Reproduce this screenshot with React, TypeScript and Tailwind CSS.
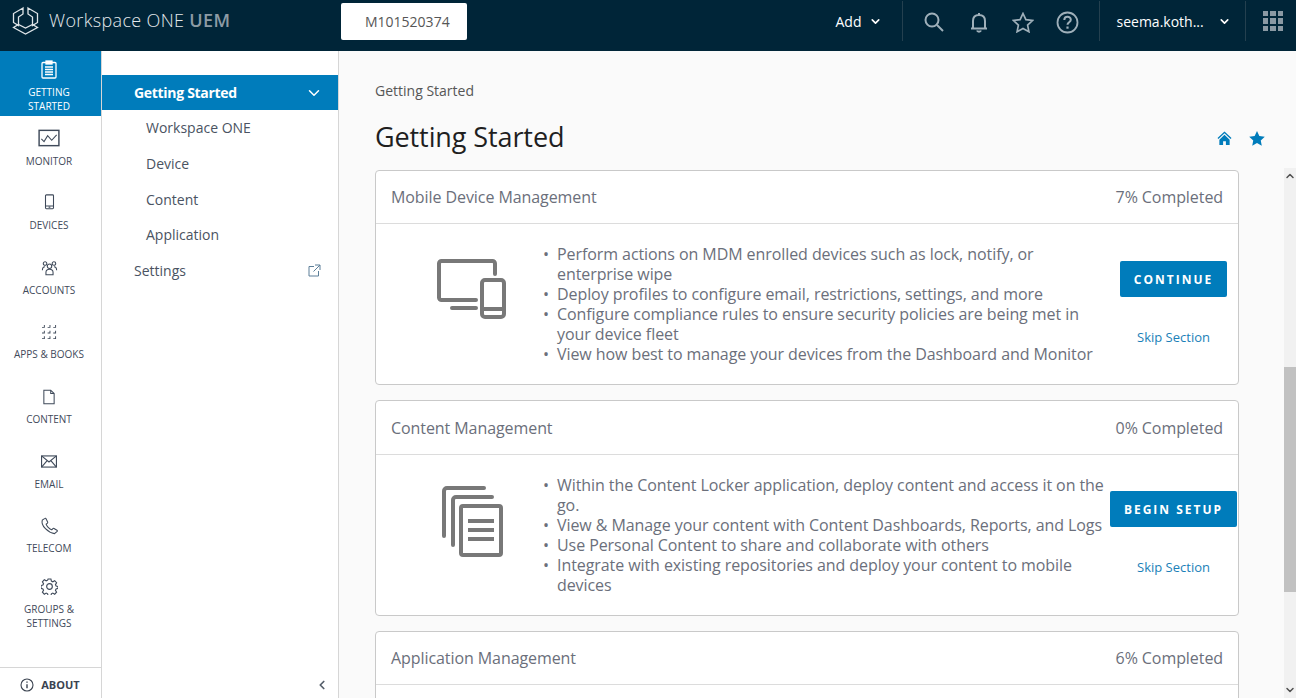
import { ChevronDown, ChevronLeft, ChevronUp } from "lucide-react";
import type { ReactNode } from "react";

const stroke = { fill: "none", stroke: "currentColor", strokeWidth: 1.2 };

const railItems: { label: string[]; h: string; iconH: string; labelMt: string; icon: ReactNode }[] = [
  {
    label: ["MONITOR"],
    h: "h-[65px]",
    iconH: "h-[31px]",
    labelMt: "mt-[7px]",
    icon: (
      <svg width="22" height="18" viewBox="0 0 24 20" {...stroke}>
        <rect x="1" y="1.5" width="22" height="17" strokeWidth="1.6" />
        <path d="M3.5 11l3 3 4-6.5 4.5 5 5.5-6" />
      </svg>
    ),
  },
  {
    label: ["DEVICES"],
    h: "h-[64px]",
    iconH: "h-[29px]",
    labelMt: "mt-[8px]",
    icon: (
      <svg width="11" height="16" viewBox="0 0 12 18" {...stroke}>
        <rect x="1.500" y="1" width="9" height="15.500" rx="1" />
        <path d="M1.500 13.500h9M5 15h2" />
      </svg>
    ),
  },
  {
    label: ["ACCOUNTS"],
    h: "h-[65px]",
    iconH: "h-[31px]",
    labelMt: "mt-[7px]",
    icon: (
      <svg width="17" height="16" viewBox="0 0 18 18" {...stroke}>
        <circle cx="9" cy="7" r="2.500" />
        <circle cx="4" cy="4" r="2" />
        <circle cx="14" cy="4" r="2" />
        <path d="M5 16.500v-2.500c0-2 1.500-3.500 4-3.500s4 1.500 4 3.500v2.500zM1 11.500c0-2.500 1-4 3-4M17 11.500c0-2.500-1-4-3-4" />
      </svg>
    ),
  },
  {
    label: ["APPS & BOOKS"],
    h: "h-[64px]",
    iconH: "h-[30px]",
    labelMt: "mt-[7px]",
    icon: (
      <svg width="15" height="15" viewBox="0 0 16 16" fill="#3f4a5a">
        {[1, 7, 13].flatMap((y) =>
          [1, 7, 13].map((x) => <path key={x + "-" + y} d={`M${x + 1} ${y - 1}h1v3h-3v-1h2z`} />),
        )}
      </svg>
    ),
  },
  {
    label: ["CONTENT"],
    h: "h-[65px]",
    iconH: "h-[31px]",
    labelMt: "mt-[7px]",
    icon: (
      <svg width="12" height="16" viewBox="0 0 14 18" {...stroke}>
        <path d="M1 1h8l4 4v12H1zM9 1v4h4" />
      </svg>
    ),
  },
  {
    label: ["EMAIL"],
    h: "h-[65px]",
    iconH: "h-[29px]",
    labelMt: "mt-[9px]",
    icon: (
      <svg width="18" height="13" viewBox="0 0 18 14" {...stroke}>
        <rect x="1" y="1" width="16" height="12" />
        <path d="M1 1l8 6.500L17 1M1 13l6-7M17 13l-6-7" />
      </svg>
    ),
  },
  {
    label: ["TELECOM"],
    h: "h-[61px]",
    iconH: "h-[31px]",
    labelMt: "mt-[6px]",
    icon: (
      <svg width="19" height="18" viewBox="0 0 20 20" {...stroke}>
        <path d="M5 1.500L2 3.500c-1 3 1 7 3.500 9.500S12 18 15.500 18.500l3-2.500c.5-.5.3-1-.2-1.300l-3.300-2c-.5-.3-1-.2-1.300.2l-1.200 1.300C11 13.800 9.500 12.500 8.500 11.500S6.700 9 6.300 8l1.400-1.200c.4-.4.4-.8.2-1.300L6 1.800c-.3-.5-.6-.6-1-.3z" />
      </svg>
    ),
  },
  {
    label: ["GROUPS &", "SETTINGS"],
    h: "h-[70px]",
    iconH: "h-[30px]",
    labelMt: "mt-[7px]",
    icon: (
      <svg width="17" height="17" viewBox="0 0 18 18" {...stroke}>
        <circle cx="9" cy="9" r="3" />
        <path d="M7.500 1h3l.5 2.300 1.500.7 2-1.200 2 2.200-1.200 2 .7 1.500 2 .5v2l-2 .5-.7 1.500 1.200 2-2 2.200-2-1.200-1.500.7-.5 2.300h-3l-.5-2.300-1.500-.7-2 1.200-2-2.200 1.200-2-.7-1.500-2-.5V8l2-.5.7-1.500-1.200-2 2-2.200 2 1.200 1.500-.7z" />
      </svg>
    ),
  },
];

function Rail() {
  return (
    <div className="flex w-[102px] shrink-0 flex-col border-r border-[#d6d6d6] bg-white">
      <div className="flex h-[65px] shrink-0 flex-col items-center bg-[#007cbb] pr-[3px] pt-[9px] text-white">
        <svg width="16" height="19" viewBox="0 0 16 19" fill="none" stroke="currentColor" strokeWidth="1.3">
          <rect x="1" y="2.500" width="14" height="15.500" rx="1" />
          <rect x="5" y="1" width="6" height="3" fill="currentColor" />
          <path d="M4 7h8M4 9.500h8M4 12h8M4 14.500h8" />
        </svg>
        <div className="mt-[6px] text-center text-[10px] leading-[14px]">
          GETTING
          <br />
          STARTED
        </div>
      </div>
      {railItems.map((item) => (
        <div key={item.label[0]} className={"flex shrink-0 flex-col items-center pr-[3px] text-[#3f4a5a] " + item.h}>
          <div className={"flex items-end justify-center " + item.iconH}>{item.icon}</div>
          <div className={"text-center text-[10px] leading-[14px] " + item.labelMt}>
            {item.label.map((l) => (
              <div key={l}>{l}</div>
            ))}
          </div>
        </div>
      ))}
      <div className="mt-auto flex h-[31px] items-center justify-center gap-[7px] border-t border-[#d6d6d6] pr-[1px] pt-[4px] text-[#3b4350]">
        <svg width="14" height="14" viewBox="0 0 14 14" fill="none" stroke="currentColor" strokeWidth="1.1">
          <circle cx="7" cy="7" r="6" />
          <path d="M7 6.200v4M7 3.500v1.300" strokeWidth="1.4" />
        </svg>
        <span className="text-[11px] font-bold">ABOUT</span>
      </div>
    </div>
  );
}

function SubNav() {
  return (
    <div className="flex w-[237px] shrink-0 flex-col border-r border-[#d6d6d6] bg-white pt-6 text-[14px] text-[#4a5362]">
      <div className="flex h-[35px] items-center justify-between bg-[#007cbb] pl-[32px] pr-[15px] font-bold tracking-[-0.3px] text-white">
        Getting Started
        <ChevronDown size={18} strokeWidth={2} />
      </div>
      <div className="flex h-[36px] items-center pb-[2px] pl-[44px]">Workspace ONE</div>
      <div className="flex h-[36px] items-center pb-[2px] pl-[44px]">Device</div>
      <div className="flex h-[36px] items-center pb-[2px] pl-[44px]">Content</div>
      <div className="flex h-[35px] items-center pb-[2px] pl-[44px]">Application</div>
      <div className="flex h-[36px] items-center justify-between pb-[2px] pl-[32px] pr-[17px]">
        Settings
        <svg width="13" height="13" viewBox="0 0 13 13" fill="none" stroke="#5c7f99" strokeWidth="1">
          <path d="M6 2.500H1v9.500h9.500V7M7 1h5v5M12 1L5.500 7.500" />
        </svg>
      </div>
      <div className="mt-auto flex h-[31px] items-center justify-end pr-[9px] pt-[4px] text-[#565f6b]">
        <ChevronLeft size={14} strokeWidth={3} />
      </div>
    </div>
  );
}

function Card({
  title,
  pct,
  icon,
  bullets,
  action,
  h,
  headH = "h-[53px]",
  actionPt = "pt-[37px]",
}: {
  title: string;
  pct: string;
  icon?: ReactNode;
  bullets?: string[];
  action?: string;
  h: string;
  headH?: string;
  actionPt?: string;
}) {
  return (
    <div className={"shrink-0 rounded-[4px] border border-[#c9c9c9] bg-white " + h}>
      <div className={"flex items-center justify-between border-b border-[#dcdcdc] px-[15px] text-[16px] tracking-[-0.075px] text-[#6b6f7b] " + headH}>
        <span>{title}</span>
        <span>{pct}</span>
      </div>
      {bullets && (
        <div className="flex h-[160px]">
          <div className="flex w-[155px] shrink-0 items-start justify-center pl-[36px] pt-[33px]">{icon}</div>
          <ul className="w-[578px] shrink-0 pl-[10px] pt-[20px] text-[16px] leading-[20px] tracking-[-0.075px] text-[#6b6f7b]">
            {bullets.map((b) => (
              <li key={b} className="flex">
                <span className="w-[16px] shrink-0 pl-[2px]">•</span>
                <span>{b}</span>
              </li>
            ))}
          </ul>
          <div className={"flex flex-1 flex-col items-center " + actionPt}>
            <div className="flex h-[36px] items-center whitespace-nowrap rounded-[2px] bg-[#007cbb] px-[13.5px] pt-[1px] text-[12px] font-bold tracking-[2px] text-white">
              {action}
            </div>
            <div className="mt-[31px] text-[13px] leading-[18px] text-[#1b7fb8]">Skip Section</div>
          </div>
        </div>
      )}
    </div>
  );
}

export default function App() {
  return (
    <div className="flex h-[698px] w-[1296px] flex-col overflow-hidden bg-[#fafafa] font-['Open_Sans',sans-serif]">
      <header className="flex h-[51px] shrink-0 items-center bg-[#002538] text-white">
        <div className="flex w-[341px] shrink-0 items-center pb-[10px] pl-[12px]">
          <svg width="27" height="29" viewBox="0 0 27 29" fill="none" stroke="#dfe5e8" strokeWidth="1.3">
            <path d="M11 2L1.500 7.500v9l5 3V11l4.500-3zM16 2l9.500 5.500v9l-5 3V11L16 8z" />
            <path d="M1.500 21.500l12 6.500 12-6.500-5-3-7 3.500-7-3.500z" />
          </svg>
          <span className="ml-[10px] text-[18px] font-light tracking-[0.35px] text-[#e4e9ec]">
            Workspace ONE <span className="font-semibold text-[#8d9ba5]">UEM</span>
          </span>
        </div>
        <div className="mb-[8px] flex h-[37px] w-[126px] items-center rounded-[2px] bg-white pl-[24px] text-[14px] text-[#565656]">
          M101520374
        </div>
        <div className="mb-[9px] ml-auto flex h-[40px] items-center text-[14px]">
          <span>Add</span>
          <ChevronDown size={13} strokeWidth={3} className="ml-[7px]" />
          <div className="ml-[20px] h-[40px] w-px bg-[#24404f]" />
          <svg className="ml-[21px] mt-[2px]" width="20" height="20" viewBox="0 0 20 20" fill="none" stroke="#9fb0ba" strokeWidth="2">
            <circle cx="8" cy="8" r="6.500" />
            <path d="M13 13l6 6" />
          </svg>
          <svg className="ml-[26px] mt-[2px]" width="18" height="21" viewBox="0 0 18 21" fill="none" stroke="#9fb0ba" strokeWidth="2">
            <path d="M1 16.500h16M3 16.500V9c0-4 2.500-6 6-6s6 2 6 6v7.500M9 1v2M7 18.500c.5 1.500 3.500 1.500 4 0" />
          </svg>
          <svg className="ml-[24px] mt-[2px]" width="22" height="21" viewBox="0 0 22 21" fill="none" stroke="#9fb0ba" strokeWidth="1.700">
            <path d="M11 1.500l2.900 6.200 6.600.8-4.900 4.600 1.300 6.600L11 16.400l-5.900 3.300 1.300-6.600L1.500 8.500l6.600-.8z" />
          </svg>
          <svg className="ml-[22px] mt-[2px]" width="23" height="23" viewBox="0 0 23 23" fill="none" stroke="#9fb0ba" strokeWidth="1.800">
            <circle cx="11.500" cy="11.500" r="10" />
            <path d="M8.300 9c0-4.300 6.500-4.300 6.500-.3 0 2.500-3.300 2.500-3.300 5" strokeWidth="2" />
            <path d="M11.500 15.500v2.200" strokeWidth="2.2" />
          </svg>
          <div className="ml-[20px] h-[40px] w-px bg-[#24404f]" />
          <span className="ml-[17px] w-[89px]">seema.koth...</span>
          <ChevronDown size={13} strokeWidth={3} className="ml-[12px]" />
          <div className="ml-[14px] h-[40px] w-px bg-[#24404f]" />
          <div className="ml-[17px] mr-[13px] grid grid-cols-3 gap-[2px]">
            {Array.from({ length: 9 }).map((_, i) => (
              <div key={i} className="h-[5.5px] w-[5.5px] bg-[#8a99a3]" />
            ))}
          </div>
        </div>
      </header>
      <div className="flex min-h-0 flex-1">
        <Rail />
        <SubNav />
        <main className="flex min-w-0 flex-1 flex-col">
          <div className="flex h-[117px] shrink-0 flex-col pl-[36px] pr-[31px] pt-[30px]">
            <div className="text-[14px] leading-[20px] text-[#565656]">Getting Started</div>
            <div className="mt-[16px] flex items-center justify-between">
              <h1 className="text-[27px] leading-[40px] tracking-[-0.1px] text-[#1f1f1f]">Getting Started</h1>
              <div className="flex items-center gap-[17px] pt-[2px]">
                <svg width="15" height="14" viewBox="0 0 16 15" fill="#007cbb">
                  <path d="M8 0.500L0.500 7.500l1 1L8 2.500l6.500 6 1-1zM2.500 9.500V15h4v-4h3v4h4V9.500L8 4z" />
                </svg>
                <svg width="16" height="15" viewBox="0 0 17 16" fill="#007cbb">
                  <path d="M8.500 0l2.500 5.300 5.800.7-4.300 4 1.100 5.800-5.100-2.900-5.100 2.900 1.100-5.800L.2 6l5.800-.7z" />
                </svg>
              </div>
            </div>
          </div>
          <div className="flex min-h-0 flex-1">
            <div className="flex flex-1 flex-col gap-[15px] overflow-hidden pl-[36px] pr-[45px] pt-[2px]">
              <Card
                title="Mobile Device Management"
                pct="7% Completed"
                h="h-[215px]"
                action="CONTINUE"
                icon={
                  <svg className="mt-[2px]" width="69" height="60" viewBox="0 0 69 60" fill="none" stroke="#787878" strokeWidth="4">
                    <path d="M58 15V4.500A2.500 2.500 0 0 0 55.500 2H4.500A2.500 2.500 0 0 0 2 4.500v34A2.500 2.500 0 0 0 4.500 41H39M15 49h24" strokeLinecap="round" />
                    <rect x="45" y="21" width="22" height="37" rx="3" />
                    <path d="M45 50h22" />
                  </svg>
                }
                bullets={[
                  "Perform actions on MDM enrolled devices such as lock, notify, or enterprise wipe",
                  "Deploy profiles to configure email, restrictions, settings, and more",
                  "Configure compliance rules to ensure security policies are being met in your device fleet",
                  "View how best to manage your devices from the Dashboard and Monitor",
                ]}
              />
              <Card
                title="Content Management"
                pct="0% Completed"
                h="h-[216px]"
                headH="h-[54px]"
                actionPt="pt-[36px]"
                action="BEGIN SETUP"
                icon={
                  <svg className="ml-[1px] mt-[-2px]" width="61" height="71" viewBox="0 0 61 71" fill="none" stroke="#787878" strokeWidth="4">
                    <path d="M2 50V5a3 3 0 0 1 3-3h37M11 59V14a3 3 0 0 1 3-3h36" strokeLinecap="round" />
                    <rect x="19" y="20" width="40" height="49" rx="2" />
                    <path d="M26 35h26M26 44h26M26 53h26" />
                  </svg>
                }
                bullets={[
                  "Within the Content Locker application, deploy content and access it on the go.",
                  "View & Manage your content with Content Dashboards, Reports, and Logs",
                  "Use Personal Content to share and collaborate with others",
                  "Integrate with existing repositories and deploy your content to mobile devices",
                ]}
              />
              <Card title="Application Management" pct="6% Completed" h="h-[200px]" />
            </div>
            <div className="flex w-[12px] shrink-0 flex-col bg-[#f1f1f1]">
              <ChevronUp size={12} strokeWidth={3} className="mt-[2px] text-[#505050]" />
              <div className="mt-[185px] h-[225px] bg-[#c1c1c1]" />
              <ChevronDown size={12} strokeWidth={3} className="mt-auto mb-[2px] text-[#505050]" />
            </div>
          </div>
        </main>
      </div>
    </div>
  );
}
